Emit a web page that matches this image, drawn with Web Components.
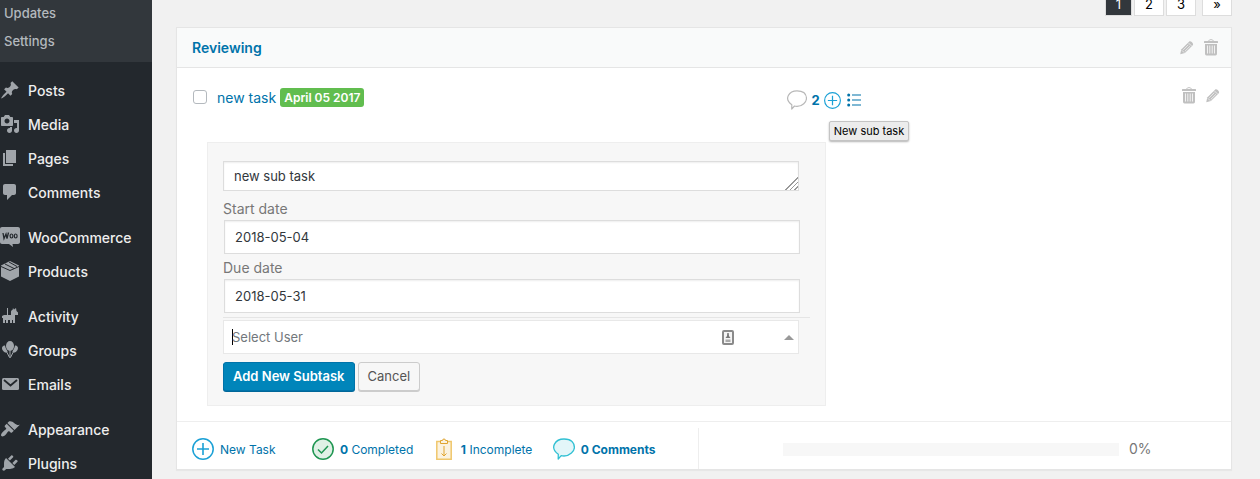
<!DOCTYPE html>
<html lang="en">
<head>
<meta charset="utf-8">
<meta name="viewport" content="width=device-width, initial-scale=1">
<title>Tasks</title>
<style>
  body {
    margin: 0;
    background: #f1f1f1;
    color: #32373c;
    font-family: Inter, Roboto, "Liberation Sans", sans-serif;
    font-size: 13px;
  }
</style>
</head>
<body>

<pm-escritorio>
  <pm-menu slot="menu">
    <pm-subenlace slot="submenu">Updates</pm-subenlace>
    <pm-subenlace slot="submenu">Settings</pm-subenlace>
    <pm-enlace icono="chincheta">Posts</pm-enlace>
    <pm-enlace icono="medios">Media</pm-enlace>
    <pm-enlace icono="paginas">Pages</pm-enlace>
    <pm-enlace icono="globo">Comments</pm-enlace>
    <pm-enlace icono="woo" separado>WooCommerce</pm-enlace>
    <pm-enlace icono="caja">Products</pm-enlace>
    <pm-enlace icono="actividad" separado>Activity</pm-enlace>
    <pm-enlace icono="grupos">Groups</pm-enlace>
    <pm-enlace icono="correo">Emails</pm-enlace>
    <pm-enlace icono="brocha" separado>Appearance</pm-enlace>
    <pm-enlace icono="enchufe">Plugins</pm-enlace>
  </pm-menu>

  <pm-paginacion></pm-paginacion>

  <pm-lista titulo="Reviewing">
    <pm-tarea nombre="new task" fecha="April 05 2017" comentarios="2"></pm-tarea>
    <pm-formulario>
      <pm-campo etiqueta="Start date" valor="2018-05-04"></pm-campo>
      <pm-campo etiqueta="Due date" valor="2018-05-31"></pm-campo>
    </pm-formulario>
    <pm-resumen slot="pie" avance="0"></pm-resumen>
  </pm-lista>
</pm-escritorio>

<script>
/**
 * Clase base: abre la raiz sombra y monta estilos y plantilla.
 */
class ComponenteWeb extends HTMLElement {

  constructor() {
    super();
    this.DOMRaiz = this.attachShadow({mode: 'open'});
  }

  connectedCallback() {
    this.DOMRaiz.innerHTML = `
      <style>
        *, *::before, *::after { box-sizing: border-box; }
        :host { display: block; box-sizing: border-box; }
        a { color: #0073aa; text-decoration: none; }
        button, input, textarea { font: inherit; margin: 0; }
        ${this.__estilos()}
      </style>
      ${this.__plantillaHTML()}`;
  }

  __estilos() { return ''; }
  __plantillaHTML() { return '<slot></slot>'; }
}

// Dibujos: [viewBox, contenido]
const ICONOS = {
  chincheta: ['0 0 20 20', '<path fill="currentColor" d="M10.44 3.02l1.82-1.82 6.36 6.35-1.83 1.82c-1.05-.68-2.48-.57-3.41.36l-.75.75c-.92.93-1.04 2.35-.35 3.41l-1.83 1.82-2.41-2.41-2.8 2.79c-.42.42-3.38 2.71-3.8 2.29s1.86-3.39 2.28-3.81l2.79-2.79L4.1 9.36l1.83-1.82c1.05.69 2.48.57 3.4-.36l.75-.75c.93-.92 1.05-2.35.36-3.41z"/>'],
  medios: ['0 0 20 20', '<path fill="currentColor" fill-rule="evenodd" d="M13 11V4c0-.55-.45-1-1-1h-1.67L9 1H5L3.67 3H2c-.55 0-1 .45-1 1v7c0 .55.45 1 1 1h10c.55 0 1-.45 1-1zM7 4.5c1.38 0 2.5 1.12 2.5 2.5S8.38 9.5 7 9.5 4.5 8.38 4.5 7 5.62 4.5 7 4.5zM14 6h5v10.5c0 1.38-1.12 2.5-2.5 2.5S14 17.88 14 16.5s1.12-2.5 2.5-2.5c.17 0 .34.02.5.05V9h-3V6zm-4 8.05V13h2v3.5c0 1.38-1.12 2.5-2.5 2.5S7 17.88 7 16.5 8.12 14 9.5 14c.17 0 .34.02.5.05z"/>'],
  paginas: ['0 0 20 20', '<path fill="currentColor" d="M6 15V2h10v13H6zm-1 1h8v2H3V5h2v11z"/>'],
  globo: ['0 0 20 20', '<path fill="currentColor" d="M5 2h9c1.1 0 2 .9 2 2v7c0 1.1-.9 2-2 2h-2l-5 5v-5H5c-1.1 0-2-.9-2-2V4c0-1.1.9-2 2-2z"/>'],
  woo: ['0 0 20 20', '<path fill="currentColor" d="M2 0h16c1.1 0 2 .9 2 2v13c0 1.1-.9 2-2 2h-5.500l.5 3-4-3H2c-1.1 0-2-.9-2-2V2C0 .9.9 0 2 0z"/><path fill="none" stroke="#23282d" stroke-width="1.300" d="M3 6l1 5.500L6 7l1 4.500L8.500 5.500"/><ellipse cx="11.500" cy="9" rx="1.400" ry="2" fill="none" stroke="#23282d" stroke-width="1.200"/><ellipse cx="15.700" cy="9" rx="1.400" ry="2" fill="none" stroke="#23282d" stroke-width="1.200"/>'],
  caja: ['0 0 20 20', '<path fill="currentColor" d="M10 0l9 4.500v11L10 20l-9-4.500v-11z"/><path fill="none" stroke="#23282d" d="M1 5.500l9 4 9-4M5 3l9 4.500M9 1l8 4.500"/>'],
  actividad: ['0 0 20 20', '<path fill="currentColor" d="M7 2h1v7h3V6c0-1.500 1-2 1.500-2l.5-2 1 1.500L16 2l.5 3 1.500 1.500V9h-3v8h-2v-3h-1v3h-2v-3H8v3H6v-3H5v3H3v-5H2v-2l2-1h3z"/>'],
  grupos: ['0 0 20 20', '<g fill="currentColor"><ellipse cx="10" cy="6" rx="4" ry="5"/><path d="M5 5.500c-3 0-3.500 2.500-2.500 4.500s3 3 5.200 2.500C7.500 10 5.500 9 5 5.500zM15 5.500c3 0 3.500 2.500 2.500 4.500s-3 3-5.200 2.500c.2-2.500 2.200-3.500 2.700-7z"/></g><path fill="none" stroke="currentColor" d="M10 11v7M7 12.500l2.500 5M13 12.500l-2.500 5"/>'],
  correo: ['0 0 20 20', '<rect x="2" y="4" width="17" height="12" rx="1.500" fill="currentColor"/><path fill="none" stroke="#23282d" stroke-width="1.800" d="M4 6l6.500 5.500L17 6"/>'],
  brocha: ['0 0 20 20', '<path fill="currentColor" d="M14.480 11.060L7.410 3.990l1.500-1.500c.5-.56 2.300-.47 3.510.32 1.210.8 1.430 1.280 2.910 2.100 1.180.64 2.450 1.260 4.450.85zm-.71.71L6.700 4.700 4.930 6.470c-.39.39-.39 1.020 0 1.410l1.060 1.060c.39.39.39 1.030 0 1.420-.6.6-1.430 1.110-2.210 1.690-.35.26-.7.53-1.010.84C1.430 14.230.4 16.080 1.400 17.070c.99 1 2.840-.03 4.180-1.360.31-.31.58-.66.85-1.020.57-.78 1.080-1.610 1.690-2.210.39-.39 1.020-.39 1.410 0l1.060 1.060c.39.39 1.020.39 1.410 0z"/>'],
  enchufe: ['0 0 20 20', '<path fill="currentColor" d="M13.110 4.360L9.870 7.600 8 5.730l3.240-3.240c.35-.34 1.050-.2 1.560.32.52.51.66 1.210.31 1.550zm-8 1.770l.91-1.120 9.010 9.010-1.190.84c-.71.71-2.630 1.160-3.820 1.160H6.140L4.900 17.260c-.59.59-1.540.59-2.120 0-.59-.58-.59-1.530 0-2.120l1.240-1.240v-3.880c0-1.130.4-3.190 1.090-3.890zm7.260 3.970l3.240-3.240c.34-.35 1.040-.21 1.550.31.52.51.66 1.210.31 1.550l-3.240 3.250z"/>'],
  lapiz: ['0 0 15 15', '<path fill="currentColor" d="M.3 14.700l1-5L9.700 1.300c1.500-1.500 5.500 2 4 3.800L5.300 13.500z"/><path fill="none" stroke="#fff" stroke-width=".7" d="M9.300 2.800l3 3M3.500 10l5.500-5.500M5.200 11.600l5.500-5.500M2 10.500l2.500 2.500"/>'],
  papelera: ['0 0 14 17', '<path fill="currentColor" d="M1 5h12v9.500c0 1-.6 2-1.500 2h-9c-.9 0-1.500-1-1.500-2zM.5 2h13c.3 0 .5.300.5.700V4H0V2.700c0-.4.200-.7.500-.7z"/><path fill="none" stroke="currentColor" d="M4.500 2.500c0-2.500 5-2.500 5 0"/><path stroke="#fff" stroke-width=".8" d="M3.500 6.500v8M5.800 6.500v8M8.200 6.500v8M10.500 6.500v8"/>'],
  bocadillo: ['0 0 22 22', '<path fill="var(--relleno, none)" stroke="currentColor" stroke-width="1.300" stroke-linejoin="round" d="M5.300 16.200C-4 9.500 2.500 1 11 1s10.400 5 10.400 8.500S17 18 11 18c-1 0-2-.1-2.800-.4L5.200 21z"/>'],
  mas: ['0 0 22 22', '<circle cx="11" cy="11" r="10.200" fill="none" stroke="currentColor" stroke-width="1.500"/><path stroke="currentColor" stroke-width="1.600" d="M11 5v12M5 11h12"/>'],
  lista: ['0 0 14 14', '<path stroke="currentColor" stroke-width="1.200" d="M5 2h9M5 7h9M5 12h9"/><g fill="currentColor"><circle cx="1.700" cy="2" r="1.500"/><circle cx="1.700" cy="7" r="1.500"/><circle cx="1.700" cy="12" r="1.500"/></g>'],
  hecho: ['0 0 22 22', '<circle cx="11" cy="11" r="10.200" fill="#e0f1e6" stroke="currentColor" stroke-width="1.500"/><path fill="none" stroke="currentColor" stroke-width="1.500" d="M6 11.500l3.500 3.500L16 8"/>'],
  portapapeles: ['0 0 16 22', '<path fill="#fbf2df" stroke="#f0c76c" stroke-width="1.500" d="M.8 3.500h14.400v17.700H.8z"/><path fill="#fbf2df" stroke="currentColor" d="M4.500 5.500v-3h2a1.500 1.500 0 013 0h2v3z"/><path fill="none" stroke="currentColor" d="M8 8v9.500M5.500 15.500L8 18l2.500-2.500"/>'],
  contacto: ['0 0 12 15', '<rect x="1" y="1" width="10" height="13" rx="1" fill="#f4f4f4" stroke="#8a8a8a" stroke-width="2"/><path fill="#777" d="M5.300 3h1.400l.3 3 1.500 2h-5L5 6z"/><path fill="#aaa" d="M3.500 9.500h5V12h-5z"/>']
};

class Icono extends ComponenteWeb {
  static __etiqueta = 'pm-icono';

  __estilos() {
    return `
      :host { display: inline-block; flex: none; width: 20px; height: 20px; }
      svg { display: block; width: 100%; height: 100%; }`;
  }

  __plantillaHTML() {
    const [caja, dibujo] = ICONOS[this.getAttribute('nombre')];
    return `<svg viewBox="${caja}" aria-hidden="true">${dibujo}</svg>`;
  }
}

class Escritorio extends ComponenteWeb {
  static __etiqueta = 'pm-escritorio';

  __estilos() {
    return `
      :host { display: flex; height: 100vh; overflow: hidden; }
      main { flex: 1; min-width: 0; padding: 0 28px 8px 24px; }`;
  }

  __plantillaHTML() {
    return '<slot name="menu"></slot><main><slot></slot></main>';
  }
}

class Menu extends ComponenteWeb {
  static __etiqueta = 'pm-menu';

  __estilos() {
    return `
      :host { flex: none; width: 152px; background: #23282d; }
      .submenu { display: grid; gap: 2px; padding: 0 4px 8px; margin-bottom: 11px; background: #32373c; }`;
  }

  __plantillaHTML() {
    return `<nav><div class="submenu"><slot name="submenu"></slot></div><slot></slot></nav>`;
  }
}

class Subenlace extends ComponenteWeb {
  static __etiqueta = 'pm-subenlace';

  __estilos() {
    return 'a { display: block; line-height: 26px; font-weight: 500; color: #b4b9be; }';
  }

  __plantillaHTML() {
    return '<a href="#"><slot></slot></a>';
  }
}

class Enlace extends ComponenteWeb {
  static __etiqueta = 'pm-enlace';

  __estilos() {
    return `
      :host([separado]) { margin-top: 11px; }
      a { display: flex; align-items: center; gap: 8px; height: 34px; font-size: 14px; font-weight: 500; color: #eee; }
      pm-icono { color: #a0a5aa; }`;
  }

  __plantillaHTML() {
    return `<a href="#"><pm-icono nombre="${this.getAttribute('icono')}"></pm-icono><slot></slot></a>`;
  }
}

class Paginacion extends ComponenteWeb {
  static __etiqueta = 'pm-paginacion';

  __estilos() {
    return `
      nav { display: flex; justify-content: flex-end; align-items: flex-end; gap: 2px; height: 16px; margin-bottom: 11px; }
      a { width: 30px; border: 1px solid #ddd; background: #fff; color: #000; line-height: 22px; text-align: center; }
      .actual { width: 27px; background: #32373c; color: #fff; }
      .siguiente { margin-left: 4px; }`;
  }

  __plantillaHTML() {
    return `
      <nav aria-label="Pages">
        <a href="#" class="actual" aria-current="page">1</a><a href="#">2</a><a href="#">3</a>
        <a href="#" class="siguiente">»</a>
      </nav>`;
  }
}

class Lista extends ComponenteWeb {
  static __etiqueta = 'pm-lista';

  __estilos() {
    return `
      :host { background: #fff; border: 1px solid #e5e5e5; box-shadow: 0 1px 1px rgba(0, 0, 0, .04); }
      header { display: flex; align-items: center; height: 40px; padding: 0 13px 0 15px; background: #f9fafa; border-bottom: 1px solid #e5e5e5; }
      h2 { flex: 1; margin: 0; font-size: 14px; font-weight: 600; }
      .acciones { display: flex; gap: 10px; }
      button { display: flex; padding: 0; border: 0; background: none; color: #c0c0c0; }
      .acciones pm-icono { width: 14px; height: 17px; }
      .contenido { padding: 12px 11px 15px 16px; }
      footer { border-top: 1px solid #eee; }`;
  }

  __plantillaHTML() {
    return `
      <header>
        <h2><a href="#">${this.getAttribute('titulo')}</a></h2>
        <div class="acciones">
          <button type="button" aria-label="Edit"><pm-icono nombre="lapiz"></pm-icono></button>
          <button type="button" aria-label="Delete"><pm-icono nombre="papelera"></pm-icono></button>
        </div>
      </header>
      <div class="contenido"><slot></slot></div>
      <footer><slot name="pie"></slot></footer>`;
  }
}

class Tarea extends ComponenteWeb {
  static __etiqueta = 'pm-tarea';

  __estilos() {
    return `
      :host { display: grid; grid-template-columns: 57.8% 1fr auto; align-items: start; height: 62px; }
      div { display: flex; align-items: center; }
      button { display: flex; padding: 0; border: 0; background: none; color: #c0c0c0; }
      .nombre { height: 34px; font-size: 14px; }
      input { appearance: none; width: 14px; height: 14px; margin-right: 10px; border: 1px solid #b4b9be; border-radius: 3px; background: #fff; }
      .fecha { margin-left: 4px; padding: 0 4px; border-radius: 3px; background: #61bd4f; color: #fff; font-size: 12px; font-weight: 600; line-height: 19px; }
      .estado { height: 40px; gap: 4px; }
      .estado a { display: flex; align-items: center; gap: 5px; font-weight: 700; }
      .estado a pm-icono { color: #b8b8b8; }
      .sub { position: relative; }
      .sub button { color: #1ba1d6; }
      .sub pm-icono { width: 17px; height: 17px; }
      .ver { margin-left: 2px; color: #0073aa; }
      .ver pm-icono { width: 14px; height: 14px; }
      .ayuda { position: absolute; top: 29px; left: 5px; padding: 0 4px; border: 1px solid #c4c4c4; border-radius: 2px; background: #ececec; box-shadow: 0 1px 2px rgba(0, 0, 0, .3); color: #000; font-size: 11px; line-height: 18px; white-space: nowrap; }
      .acciones { height: 30px; gap: 10px; }
      .acciones pm-icono { width: 14px; height: 17px; }`;
  }

  __plantillaHTML() {
    return `
      <div class="nombre">
        <input type="checkbox" id="hecha" aria-label="Complete ${this.getAttribute('nombre')}">
        <a href="#">${this.getAttribute('nombre')}</a>
        <span class="fecha">${this.getAttribute('fecha')}</span>
      </div>
      <div class="estado">
        <a href="#"><pm-icono nombre="bocadillo"></pm-icono>${this.getAttribute('comentarios')}</a>
        <div class="sub">
          <button type="button" aria-describedby="ayuda" aria-label="New sub task"><pm-icono nombre="mas"></pm-icono></button>
          <span class="ayuda" id="ayuda" role="tooltip">New sub task</span>
        </div>
        <button type="button" class="ver" aria-label="Sub tasks"><pm-icono nombre="lista"></pm-icono></button>
      </div>
      <div class="acciones">
        <button type="button" aria-label="Delete"><pm-icono nombre="papelera"></pm-icono></button>
        <button type="button" aria-label="Edit"><pm-icono nombre="lapiz"></pm-icono></button>
      </div>`;
  }
}

class Campo extends ComponenteWeb {
  static __etiqueta = 'pm-campo';

  __estilos() {
    return `
      label { display: block; padding: 4px 0 2px; font-size: 14px; line-height: 19px; color: #777; }
      input { display: block; width: 98%; height: 34px; margin-left: 1px; padding: 0 10px; border: 1px solid #ddd; background: #fff; box-shadow: inset 0 1px 2px rgba(0, 0, 0, .07); color: #32373c; }`;
  }

  __plantillaHTML() {
    return `
      <label for="campo">${this.getAttribute('etiqueta')}</label>
      <input type="text" id="campo" value="${this.getAttribute('valor')}">`;
  }
}

class Formulario extends ComponenteWeb {
  static __etiqueta = 'pm-formulario';

  __estilos() {
    return `
      :host { width: 60.3%; margin-left: 14px; padding: 18px 15px 14px; border: 1px solid #eee; background: #f7f7f7; }
      textarea { display: block; width: 98%; height: 30px; margin-bottom: 4px; padding: 4px 10px; border: 1px solid #ddd; background: #fff; box-shadow: inset 0 1px 2px rgba(0, 0, 0, .07); color: #32373c; line-height: 20px; overflow: hidden; }
      textarea::-webkit-resizer { background: linear-gradient(135deg, #fff 54%, #999 54% 60%, #fff 60% 70%, #999 70% 76%, #fff 76% 86%, #999 86% 92%, #fff 92%); }
      hr { height: 1px; margin: 4px 0 2px; border: 0; background: #e5e5e5; }
      .usuario { display: flex; align-items: center; width: 98%; height: 34px; padding: 0 4px 0 8px; border: 1px solid #e8e8e8; background: #fff; }
      .usuario input { flex: 1; min-width: 0; padding: 0; border: 0; outline: 0; background: none; }
      .usuario input::placeholder { color: #72777c; opacity: 1; }
      .cursor { width: 1px; height: 16px; margin-right: -1px; background: #000; }
      .usuario pm-icono { width: 12px; height: 15px; margin-right: 50px; }
      .flecha { border: 5px solid transparent; border-top: 0; border-bottom-color: #999; }
      .botones { display: flex; gap: 3px; margin-top: 8px; }
      button { height: 29px; padding: 0 9px 1px; border: 1px solid #ccc; border-radius: 3px; background: #f7f7f7; box-shadow: 0 1px 0 #ccc; color: #555; }
      .principal { border-color: #0073aa; background: #0085ba; box-shadow: 0 1px 0 #006799; color: #fff; font-weight: 600; }`;
  }

  __plantillaHTML() {
    return `
      <textarea aria-label="Sub task">new sub task</textarea>
      <slot></slot>
      <hr>
      <div class="usuario">
        <span class="cursor"></span>
        <input type="text" placeholder="Select User" aria-label="Select User">
        <pm-icono nombre="contacto"></pm-icono>
        <span class="flecha"></span>
      </div>
      <div class="botones">
        <button type="button" class="principal">Add New Subtask</button>
        <button type="button">Cancel</button>
      </div>`;
  }
}

class Resumen extends ComponenteWeb {
  static __etiqueta = 'pm-resumen';

  __estilos() {
    return `
      :host { display: flex; height: 47px; padding-top: 6px; }
      ul { display: grid; grid-template-columns: 120fr 124fr 117fr 145fr; flex: none; width: 49.5%; margin: 0; padding: 0 0 0 15px; list-style: none; border-right: 1px solid #eee; }
      a { display: flex; align-items: center; gap: 6px; height: 42px; font-size: 12px; white-space: nowrap; }
      pm-icono { width: 22px; height: 22px; }
      .nueva pm-icono { color: #1ba1d6; }
      .hechas pm-icono { color: #1f9652; }
      .pendientes { gap: 9px; }
      .pendientes pm-icono { width: 16px; color: #e0a42e; }
      .comentarios pm-icono { color: #31c0d3; --relleno: #e3f6f9; }
      .avance { display: flex; flex: 1; align-items: center; gap: 10px; padding-left: 84px; height: 42px; }
      .barra { width: 75%; height: 13px; background: #f7f7f7; }
      .relleno { height: 100%; background: #61bd4f; }
      .cifra { flex: 1; padding-bottom: 2px; font-size: 14px; color: #777; }`;
  }

  __plantillaHTML() {
    const avance = this.getAttribute('avance');
    return `
      <ul>
        <li><a href="#" class="nueva"><pm-icono nombre="mas"></pm-icono>New Task</a></li>
        <li><a href="#" class="hechas"><pm-icono nombre="hecho"></pm-icono><span><b>0</b> Completed</span></a></li>
        <li><a href="#" class="pendientes"><pm-icono nombre="portapapeles"></pm-icono><span><b>1</b> Incomplete</span></a></li>
        <li><a href="#" class="comentarios"><pm-icono nombre="bocadillo"></pm-icono><b>0 Comments</b></a></li>
      </ul>
      <div class="avance">
        <div class="barra" role="progressbar" aria-valuenow="${avance}" aria-valuemin="0" aria-valuemax="100">
          <div class="relleno" style="width: ${avance}%"></div>
        </div>
        <span class="cifra">${avance}%</span>
      </div>`;
  }
}

function __registrarComponentes(listaDeComponentesWeb) {
  listaDeComponentesWeb.forEach(componenteWeb =>
    customElements.define(componenteWeb.__etiqueta, componenteWeb))
}

__registrarComponentes([
  Icono, Escritorio, Menu, Subenlace, Enlace, Paginacion,
  Lista, Tarea, Campo, Formulario, Resumen
]);
</script>
</body>
</html>
